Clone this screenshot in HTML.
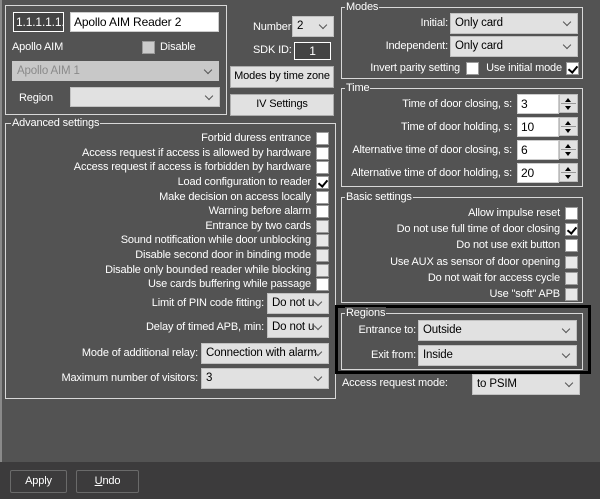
<!DOCTYPE html><html><head><style>
*{margin:0;padding:0;box-sizing:border-box}
body{width:600px;height:499px;background:#535353;position:relative;overflow:hidden;font-family:"Liberation Sans",sans-serif;font-size:11px;color:#fff;letter-spacing:-0.15px}
.a{position:absolute;white-space:nowrap}
.g{position:absolute;border:1px solid #d8d8d8}
.gl{position:absolute;background:#535353;padding:0 1px;line-height:12px;top:-7px;left:5px}
.r{position:absolute;text-align:right;white-space:nowrap;line-height:14px}
.cb{position:absolute;width:13px;height:13px;background:#fff;border:1px solid #9a9a9a}
.cb.d{background:#e8e8e8}
.cb.k::after{content:"";position:absolute;left:3px;top:1px;width:4px;height:7px;border:solid #000;border-width:0 2px 2px 0;transform:rotate(40deg)}
.cmb{position:absolute;background:#e1e1e1;border:1px solid #c0c0c0;color:#000;padding-left:4px;line-height:18px;overflow:hidden;white-space:nowrap;font-size:11.5px}
.cmb::after{content:"";position:absolute;right:7px;top:5px;width:5px;height:5px;border:solid #555;border-width:0 1px 1px 0;transform:rotate(45deg)}
.in{position:absolute;background:#fff;color:#000;padding-left:3px;line-height:18px;border:1px solid #ccc;font-size:12px}
.btn{position:absolute;background:#e1e1e1;border:1px solid #adadad;color:#000;text-align:center;line-height:19px;white-space:nowrap}
.sp{position:absolute;width:19px;height:19px;background:#e1e1e1;border:1px solid #bbb}
.sp::before{content:"";position:absolute;left:5px;top:3px;border:3px solid transparent;border-bottom:4px solid #000;border-top:0}
.sp::after{content:"";position:absolute;left:5px;top:11px;border:3px solid transparent;border-top:4px solid #000;border-bottom:0}
.sp i{position:absolute;left:1px;right:1px;top:8px;height:1px;background:#999}
</style></head><body>
<div class="a" style="left:0;top:0;width:2px;height:462px;background:#8a8a8a"></div>

<div class="g" style="left:5px;top:5px;width:222px;height:110px"></div>
<div class="a" style="left:13px;top:12px;width:51px;height:20px;border:1px solid #fff;background:#444;line-height:18px;padding-left:2px;font-size:12px">1.1.1.1.1.</div>
<div class="in" style="left:70px;top:12px;width:149px;height:20px">Apollo AIM Reader 2</div>
<div class="a" style="left:12px;top:41px">Apollo AIM</div>
<div class="cb d" style="left:142px;top:41px;background:#ccc"></div>
<div class="a" style="left:160px;top:41px">Disable</div>
<div class="cmb" style="left:12px;top:61px;width:207px;height:20px;background:#c8c8c8;color:#8a8a8a;border-color:#c8c8c8">Apollo AIM 1</div>
<div class="a" style="left:19px;top:92px">Region</div>
<div class="cmb" style="left:70px;top:87px;width:150px;height:20px"></div>

<div class="a" style="left:253px;top:21px">Number:</div>
<div class="cmb" style="left:292px;top:16px;width:42px;height:21px">2</div>
<div class="a" style="left:253px;top:44px">SDK ID:</div>
<div class="a" style="left:294px;top:42px;width:37px;height:18px;border:1px solid #fff;background:#444;text-align:center;line-height:16px;font-size:12px">1</div>
<div class="btn" style="left:230px;top:66px;width:104px;height:22px">Modes by time zone</div>
<div class="btn" style="left:230px;top:94px;width:104px;height:22px">IV Settings</div>

<div class="g" style="left:5px;top:123px;width:331px;height:276px"><span class="gl">Advanced settings</span></div>
<div class="r" style="right:289px;top:131px">Forbid duress entrance</div><div class="cb" style="left:316px;top:132px"></div>
<div class="r" style="right:289px;top:146px">Access request if access is allowed by hardware</div><div class="cb" style="left:316px;top:147px"></div>
<div class="r" style="right:289px;top:160px">Access request if access is forbidden by hardware</div><div class="cb" style="left:316px;top:161px"></div>
<div class="r" style="right:289px;top:175px">Load configuration to reader</div><div class="cb k" style="left:316px;top:176px"></div>
<div class="r" style="right:289px;top:190px">Make decision on access locally</div><div class="cb" style="left:316px;top:191px"></div>
<div class="r" style="right:289px;top:204px">Warning before alarm</div><div class="cb" style="left:316px;top:205px"></div>
<div class="r" style="right:289px;top:219px">Entrance by two cards</div><div class="cb d" style="left:316px;top:220px"></div>
<div class="r" style="right:289px;top:233px">Sound notification while door unblocking</div><div class="cb d" style="left:316px;top:234px"></div>
<div class="r" style="right:289px;top:248px">Disable second door in binding mode</div><div class="cb d" style="left:316px;top:249px"></div>
<div class="r" style="right:289px;top:263px">Disable only bounded reader while blocking</div><div class="cb d" style="left:316px;top:264px"></div>
<div class="r" style="right:289px;top:277px">Use cards buffering while passage</div><div class="cb" style="left:316px;top:278px"></div>
<div class="r" style="right:336px;top:296px">Limit of PIN code fitting:</div><div class="cmb" style="left:267px;top:293px;width:62px;height:21px">Do not u</div>
<div class="r" style="right:336px;top:320px">Delay of timed APB, min:</div><div class="cmb" style="left:267px;top:317px;width:62px;height:21px">Do not u</div>
<div class="r" style="right:402px;top:346px">Mode of additional relay:</div><div class="cmb" style="left:201px;top:343px;width:128px;height:21px">Connection with alarm</div>
<div class="r" style="right:402px;top:371px">Maximum number of visitors:</div><div class="cmb" style="left:201px;top:368px;width:128px;height:21px">3</div>

<div class="g" style="left:341px;top:7px;width:242px;height:72px"><span class="gl" style="left:3px">Modes</span></div>
<div class="r" style="right:152px;top:16px">Initial:</div><div class="cmb" style="left:450px;top:13px;width:128px;height:21px">Only card</div>
<div class="r" style="right:152px;top:39px">Independent:</div><div class="cmb" style="left:450px;top:36px;width:128px;height:21px">Only card</div>
<div class="r" style="right:140px;top:61px">Invert parity setting</div><div class="cb" style="left:466px;top:62px"></div>
<div class="r" style="right:38px;top:61px">Use initial mode</div><div class="cb k" style="left:566px;top:62px"></div>

<div class="g" style="left:341px;top:88px;width:242px;height:99px"><span class="gl" style="left:3px">Time</span></div>
<div class="r" style="right:88px;top:97px">Time of door closing, s:</div><div class="in" style="left:517px;top:94px;width:42px;height:20px">3</div><div class="sp" style="left:559px;top:94px"><i></i></div>
<div class="r" style="right:88px;top:120px">Time of door holding, s:</div><div class="in" style="left:517px;top:117px;width:42px;height:20px">10</div><div class="sp" style="left:559px;top:117px"><i></i></div>
<div class="r" style="right:88px;top:143px">Alternative time of door closing, s:</div><div class="in" style="left:517px;top:140px;width:42px;height:20px">6</div><div class="sp" style="left:559px;top:140px"><i></i></div>
<div class="r" style="right:88px;top:166px">Alternative time of door holding, s:</div><div class="in" style="left:517px;top:163px;width:42px;height:20px">20</div><div class="sp" style="left:559px;top:163px"><i></i></div>

<div class="g" style="left:341px;top:197px;width:242px;height:106px"><span class="gl" style="left:3px">Basic settings</span></div>
<div class="r" style="right:40px;top:206px">Allow impulse reset</div><div class="cb" style="left:565px;top:207px"></div>
<div class="r" style="right:40px;top:222px">Do not use full time of door closing</div><div class="cb k" style="left:565px;top:223px"></div>
<div class="r" style="right:40px;top:238px">Do not use exit button</div><div class="cb" style="left:565px;top:239px"></div>
<div class="r" style="right:40px;top:255px">Use AUX as sensor of door opening</div><div class="cb d" style="left:565px;top:256px"></div>
<div class="r" style="right:40px;top:271px">Do not wait for access cycle</div><div class="cb d" style="left:565px;top:272px"></div>
<div class="r" style="right:40px;top:287px">Use "soft" APB</div><div class="cb d" style="left:565px;top:288px"></div>

<div class="a" style="left:335px;top:305px;width:256px;height:69px;border:3px solid #000"></div>
<div class="g" style="left:341px;top:313px;width:242px;height:57px"><span class="gl" style="left:3px">Regions</span></div>
<div class="r" style="right:184px;top:323px">Entrance to:</div><div class="cmb" style="left:418px;top:320px;width:159px;height:21px">Outside</div>
<div class="r" style="right:184px;top:348px">Exit from:</div><div class="cmb" style="left:418px;top:345px;width:159px;height:21px">Inside</div>
<div class="a" style="left:342px;top:377px">Access request mode:</div><div class="cmb" style="left:472px;top:374px;width:108px;height:21px">to PSIM</div>

<div class="a" style="left:0;top:462px;width:600px;height:37px;background:#3c3b3c"></div>
<div class="a" style="left:10px;top:470px;width:57px;height:23px;border:1px solid #6a6a6a;border-radius:2px;text-align:center;line-height:21px">Apply</div>
<div class="a" style="left:76px;top:470px;width:63px;height:23px;border:1px solid #6a6a6a;border-radius:2px;text-align:center;line-height:21px"><u>U</u>ndo</div>
</body></html>
